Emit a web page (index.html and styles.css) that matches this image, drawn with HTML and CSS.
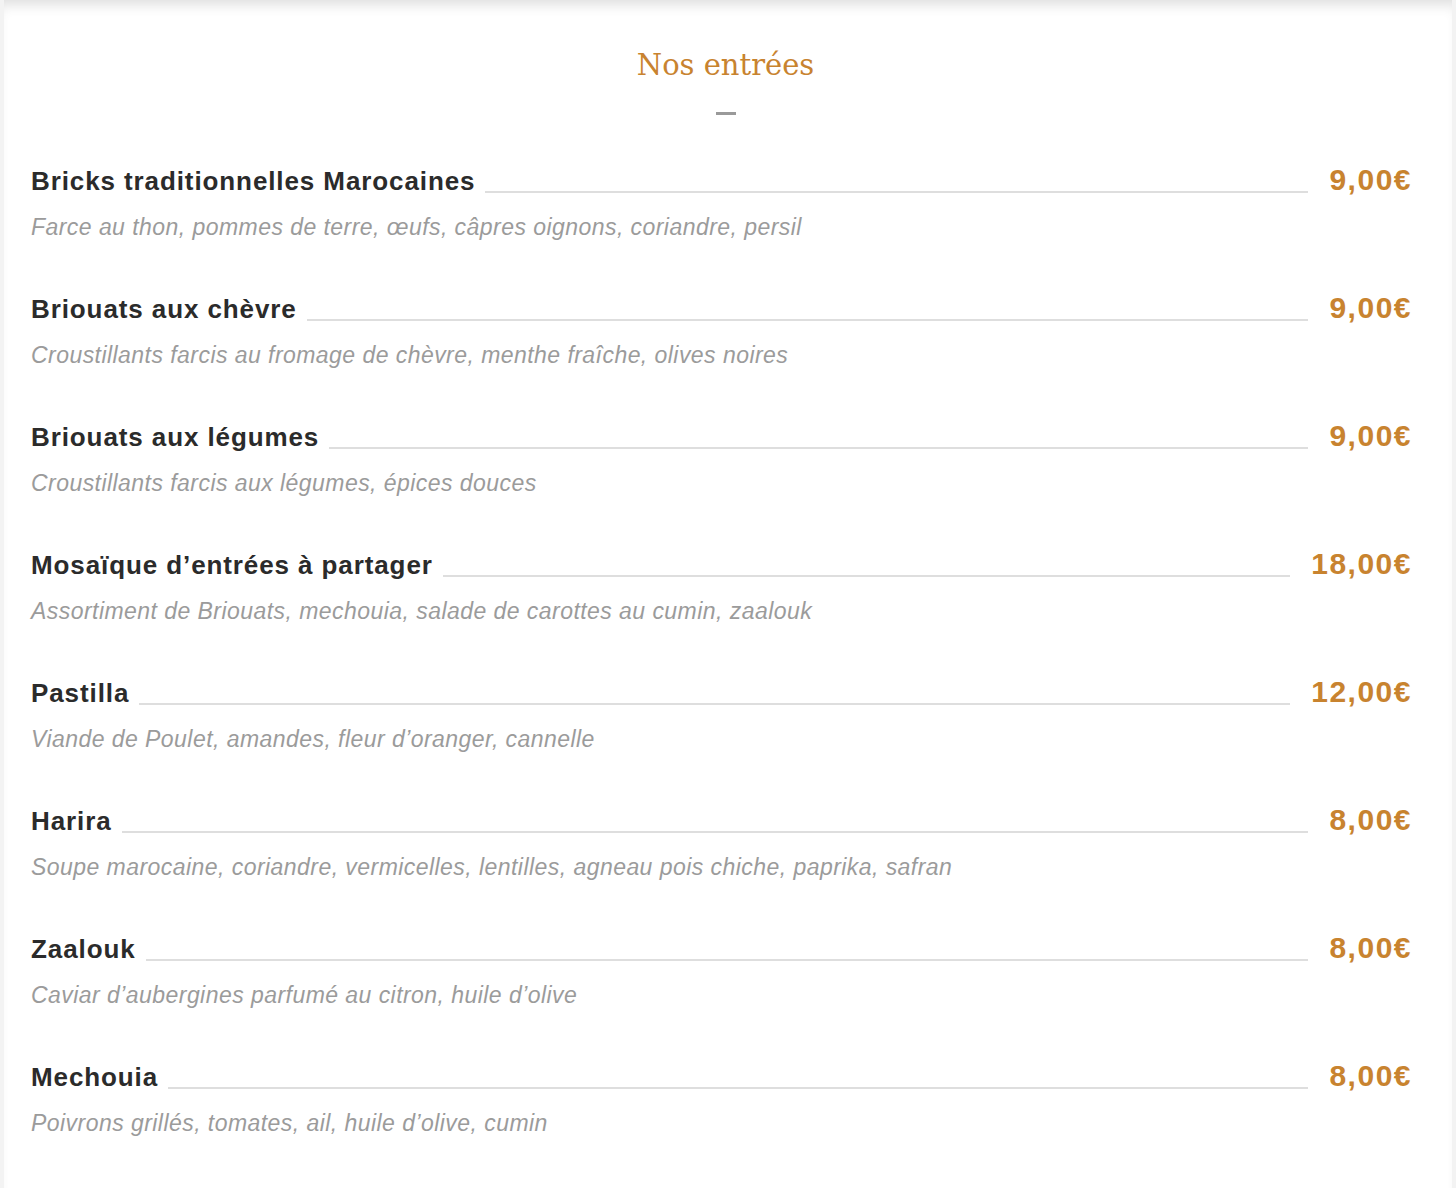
FILE: index.html
```html
<!DOCTYPE html>
<html lang="fr">
<head>
    <meta charset="UTF-8">
    <meta name="viewport" content="width=device-width, initial-scale=1.0">
    <title>Nos entrées</title>
    <link rel="stylesheet" href="styles.css">
</head>
<body>
    <section class="menu-card">
        <header class="menu-head">
            <h2 class="menu-title">Nos entrées</h2>
            <span class="menu-dash"></span>
        </header>

        <ul class="menu-list">
            <li class="dish">
                <div class="dish-row">
                    <span class="dish-name">Bricks traditionnelles Marocaines</span>
                    <span class="dish-line"></span>
                    <span class="dish-price">9,00€</span>
                </div>
                <p class="dish-desc">Farce au thon, pommes de terre, œufs, câpres oignons, coriandre, persil</p>
            </li>
            <li class="dish">
                <div class="dish-row">
                    <span class="dish-name">Briouats aux chèvre</span>
                    <span class="dish-line"></span>
                    <span class="dish-price">9,00€</span>
                </div>
                <p class="dish-desc">Croustillants farcis au fromage de chèvre, menthe fraîche, olives noires</p>
            </li>
            <li class="dish">
                <div class="dish-row">
                    <span class="dish-name">Briouats aux légumes</span>
                    <span class="dish-line"></span>
                    <span class="dish-price">9,00€</span>
                </div>
                <p class="dish-desc">Croustillants farcis aux légumes, épices douces</p>
            </li>
            <li class="dish">
                <div class="dish-row">
                    <span class="dish-name">Mosaïque d’entrées à partager</span>
                    <span class="dish-line"></span>
                    <span class="dish-price">18,00€</span>
                </div>
                <p class="dish-desc">Assortiment de Briouats, mechouia, salade de carottes au cumin, zaalouk</p>
            </li>
            <li class="dish">
                <div class="dish-row">
                    <span class="dish-name">Pastilla</span>
                    <span class="dish-line"></span>
                    <span class="dish-price">12,00€</span>
                </div>
                <p class="dish-desc">Viande de Poulet, amandes, fleur d’oranger, cannelle</p>
            </li>
            <li class="dish">
                <div class="dish-row">
                    <span class="dish-name">Harira</span>
                    <span class="dish-line"></span>
                    <span class="dish-price">8,00€</span>
                </div>
                <p class="dish-desc">Soupe marocaine, coriandre, vermicelles, lentilles, agneau pois chiche, paprika, safran</p>
            </li>
            <li class="dish">
                <div class="dish-row">
                    <span class="dish-name">Zaalouk</span>
                    <span class="dish-line"></span>
                    <span class="dish-price">8,00€</span>
                </div>
                <p class="dish-desc">Caviar d’aubergines parfumé au citron, huile d’olive</p>
            </li>
            <li class="dish">
                <div class="dish-row">
                    <span class="dish-name">Mechouia</span>
                    <span class="dish-line"></span>
                    <span class="dish-price">8,00€</span>
                </div>
                <p class="dish-desc">Poivrons grillés, tomates, ail, huile d’olive, cumin</p>
            </li>
        </ul>
    </section>
</body>
</html>
```

FILE: styles.css
```css
body {
    margin: 0;
    background: #f3f3f3;
    font-family: "Liberation Sans", Arial, sans-serif;
}
.menu-card {
    margin: 0 4px;
    min-height: 1188px;
    background: #fff;
    box-shadow: inset 0 12px 14px -8px rgba(0, 0, 0, 0.14); /* shadow from the bar above */
    padding: 0 40px 0 27px;
    box-sizing: border-box;
}
.menu-head {
    display: flex;
    flex-direction: column;
    align-items: center;
    padding: 45px 0 0 8px;
}
.menu-title {
    margin: 0;
    font-family: "DejaVu Serif", serif;
    font-weight: normal;
    font-size: 29px;
    line-height: 40px;
    color: #c8832f;
}
.menu-dash {
    display: block;
    width: 20px;
    height: 3px;
    margin-top: 27px;
    background: #9a9a9a;
}
.menu-list {
    list-style: none;
    margin: 0;
    padding: 0;
    padding-top: 48px;
}
.dish {
    height: 128px;
}
.dish-row {
    display: flex;
    align-items: baseline;
}
.dish-name {
    font-size: 26px;
    font-weight: bold;
    letter-spacing: 0.9px;
    color: #2b2b2b;
}
.dish-line {
    flex: 1;
    height: 0;
    margin: 0 21px 0 10px;
    border-bottom: 2px solid #dedede;
    transform: translateY(3px); /* sits just under the baseline */
}
.dish-price {
    font-size: 30px;
    font-weight: bold;
    letter-spacing: 1.5px;
    color: #c8832f;
}
.dish-desc {
    margin: 17px 0 0;
    font-size: 23px;
    font-style: italic;
    letter-spacing: 0.45px;
    color: #9b9b9b;
}
```
